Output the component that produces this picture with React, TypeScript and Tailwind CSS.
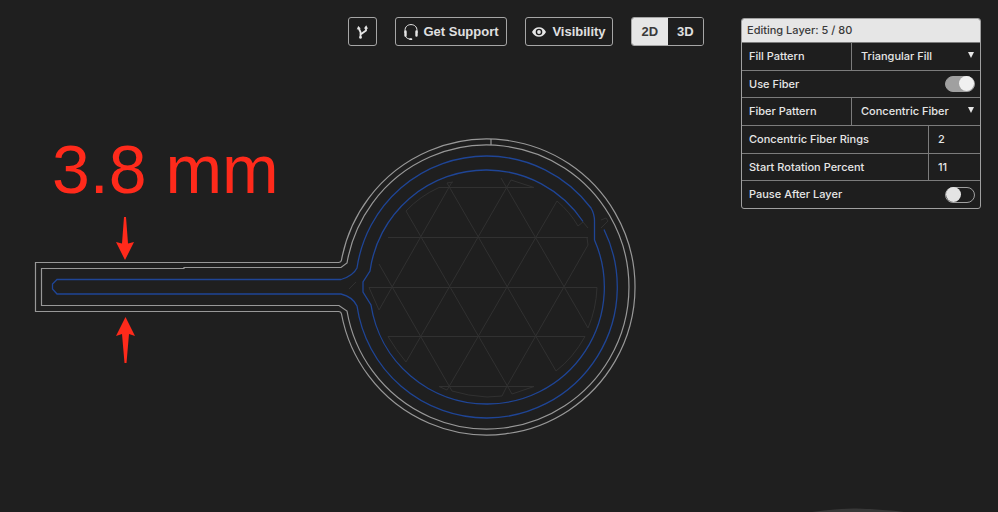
import React, { useState } from "react";

const toolbarText = "font-['Liberation_Sans',Arial,sans-serif] text-[13px] font-bold";
const toolbarButton = `${toolbarText} flex h-[29px] items-center justify-center rounded-[3px] border border-[#a6a6a6] bg-[#1e1e1e] text-[#e0e0e0]`;

function BranchIcon() {
  return (
    <svg viewBox="0 0 14 16" className="h-4 w-3.5" fill="none" stroke="#e6e6e6" aria-hidden="true">
      <path d="M4.5 13.5V10.5L10 6.5V3.5M4.5 10.5V8L2.8 4.5" strokeWidth="1.8" />
      <path d="M0.8 5.5L2.2 2L4.8 4.4ZM7.9 4.5L10.2 1.2L12 4.8Z" fill="#e6e6e6" stroke="none" />
      <circle cx="4.5" cy="13.4" r="1.3" fill="#e6e6e6" stroke="none" />
    </svg>
  );
}

function HeadsetIcon() {
  return (
    <svg viewBox="0 0 16 18" className="h-[18px] w-4 shrink-0" fill="none" stroke="#e6e6e6" aria-hidden="true">
      <path d="M2 10V7.5C2 3.8 4.5 1.6 8 1.6S14 3.8 14 7.5V10" strokeWidth="1" />
      <path d="M2.5 8.5V12.5M13.5 8.5V12.5" strokeWidth="2.4" strokeLinecap="round" />
      <path d="M2.5 13C3 15 5 16 8 16.3" strokeWidth="1" />
      <path d="M7.2 16.2H8.4" strokeWidth="1.8" strokeLinecap="round" />
    </svg>
  );
}

function EyeIcon() {
  return (
    <svg viewBox="0 0 14 10" className="h-2.5 w-3.5 shrink-0" aria-hidden="true">
      <path
        fill="#e6e6e6"
        fillRule="evenodd"
        d="M0 5C1.5 2 4 0.3 7 0.3S12.5 2 14 5C12.5 8 10 9.7 7 9.7S1.5 8 0 5ZM7 1.7A3.3 3.3 0 1 0 7 8.3A3.3 3.3 0 1 0 7 1.7Z"
      />
      <circle cx="7" cy="5" r="1.9" fill="#e6e6e6" />
    </svg>
  );
}

function LayerDrawing() {
  return (
    <svg
      viewBox="0 0 998 512"
      className="absolute inset-x-0 top-0 w-full"
      fill="none"
      role="img"
      aria-label="Layer toolpath"
    >
      {/* triangular infill */}
      <g stroke="#313131" strokeWidth="1">
        <path d="M439 187.5H534M388 237.5H588M369 287.5H597M388 336.5H585M439 386.5H534" />
        <path d="M452 182L379 310L369 287.5M511 180L406 362Q396 350 388 336.5M557 201L447 390L439 386.5M588 245L507 386L502 396L487 397Q468 396 452 391" />
        <path d="M379 264L452 391M406 211L512 394L534 386.5M447 183L556 371Q573 358 585 336.5M501 178L588 328Q596 310 597 287.5" />
        <path d="M406 211Q420 196 439 187.5M447 183L453 182M511 180L534 187.5M557 201Q570 212 578 226L583 222L588 228M588 245L587 237.5M601 220L606 218L608 221L601 228M349 289L356 282" />
      </g>
      {/* continuous fiber */}
      <path
        stroke="#1f4596"
        strokeWidth="1.3"
        d="M604 229.5A131 131 0 0 1 487 418A131 131 0 0 1 357 306Q353 297 341 294H57L52.5 289V284L57 279.5H341Q353 276 357 268A131 131 0 0 1 487 156A131 131 0 0 1 591 208Q594.5 214 594.5 221V240A117 117 0 0 1 487 404A117 117 0 0 1 371 305L363 292V282L370 271A117 117 0 0 1 487 170A117 117 0 0 1 583 221.5"
      />
      {/* walls */}
      <g stroke="#989898" strokeWidth="1.2">
        <path d="M35.5 262.5H338.5Q341 262.5 341.5 260A148 148 0 1 1 341.5 314Q341 311.5 338.5 311.5H35.5Z" />
        <path d="M41.5 268.5H184V267.5H341L347 263A142 142 0 1 1 347 311L339 305.5H41.5Z" />
        <path d="M491 139V145" />
      </g>
      {/* width annotation */}
      <g fill="#ff2a1b">
        <text x="52" y="193" fontSize="68" className="font-['Liberation_Sans',Arial,sans-serif]">
          3.8 mm
        </text>
        <path d="M124 217H126L128 243.5L134 242L125 260L116 242L122 243.5Z" />
        <path d="M125.5 317L135 336L129 334L126.5 363H124.5L122 334L116 336Z" />
      </g>
      <path d="M812 512Q840 508 857 508.5Q885 509.5 904 512Z" fill="#383838" />
    </svg>
  );
}

const rowStyle = "flex border-t border-[#7c7c7c]";
const labelStyle = "flex flex-1 items-center pl-[7px]";

function SelectRow({ id, label, options }: { id: string; label: string; options: string[] }) {
  return (
    <div className={rowStyle}>
      <label htmlFor={id} className={labelStyle}>
        {label}
      </label>
      <div className="relative flex w-[129px] border-l border-[#7c7c7c]">
        <select id={id} className="w-full appearance-none bg-transparent pl-[9px] outline-none">
          {options.map((option) => (
            <option key={option}>{option}</option>
          ))}
        </select>
        <svg viewBox="0 0 6 6" className="pointer-events-none absolute right-[6px] top-[9px] size-1.5" aria-hidden="true">
          <path d="M0 0H6L3 6Z" fill="#e6e6e6" />
        </svg>
      </div>
    </div>
  );
}

function NumberRow({ id, label, value }: { id: string; label: string; value: string }) {
  return (
    <div className={rowStyle}>
      <label htmlFor={id} className={labelStyle}>
        {label}
      </label>
      <input
        id={id}
        type="text"
        inputMode="numeric"
        defaultValue={value}
        className="w-[52px] border-l border-[#7c7c7c] bg-transparent pl-[9px] outline-none"
      />
    </div>
  );
}

function SwitchRow({ id, label, on }: { id: string; label: string; on?: boolean }) {
  return (
    <div className={`${rowStyle} pr-[5px]`}>
      <label htmlFor={id} className={labelStyle}>
        {label}
      </label>
      <input
        id={id}
        type="checkbox"
        defaultChecked={on}
        className="flex h-4 w-[30px] appearance-none items-center self-center rounded-full border border-[#a0a0a0] before:size-[15px] before:shrink-0 before:rounded-full before:bg-[#e4e4e4] checked:justify-end checked:bg-[#a0a0a0] checked:before:bg-[#f0f0f0]"
      />
    </div>
  );
}

export default function App() {
  const [view, setView] = useState("2D");
  return (
    <main className="relative min-h-screen w-full overflow-hidden bg-[#1f1f1f] font-[Inter,'Liberation_Sans',sans-serif]">
      <LayerDrawing />
      <div className="relative flex items-start justify-end gap-[37px] pr-[17px] pt-[17px]">
        <nav className="flex gap-[18px]">
          <button type="button" aria-label="Branch" className={`${toolbarButton} w-[29px]`}>
            <BranchIcon />
          </button>
          <button type="button" className={`${toolbarButton} w-28 gap-1`}>
            <HeadsetIcon />
            Get Support
          </button>
          <button type="button" className={`${toolbarButton} w-[88px] gap-1.5`}>
            <EyeIcon />
            Visibility
          </button>
          <div className={`${toolbarText} flex h-[29px] w-[73px] overflow-hidden rounded-[3px] border border-[#a6a6a6]`}>
            {["2D", "3D"].map((mode) => (
              <button
                key={mode}
                type="button"
                aria-pressed={view === mode}
                onClick={() => setView(mode)}
                className="flex-1 bg-[#1e1e1e] text-[#e0e0e0] aria-pressed:bg-[#e6e6e6] aria-pressed:text-[#3a3a3a]"
              >
                {mode}
              </button>
            ))}
          </div>
        </nav>
        <section className="mt-px w-60 overflow-hidden rounded-[3px] border border-[#a0a0a0] bg-[#1e1e1e] text-[11px] font-medium text-[#e6e6e6]">
          <h2 className="flex h-[23px] items-center bg-[#e6e6e6] pl-[5px] text-[#3a3a3a]">Editing Layer: 5 / 80</h2>
          <div className="grid h-[166px] grid-rows-6">
            <SelectRow id="fill" label="Fill Pattern" options={["Triangular Fill", "Solid Fill"]} />
            <SwitchRow id="fiber" label="Use Fiber" on />
            <SelectRow id="pattern" label="Fiber Pattern" options={["Concentric Fiber", "Isotropic Fiber"]} />
            <NumberRow id="rings" label="Concentric Fiber Rings" value="2" />
            <NumberRow id="rotation" label="Start Rotation Percent" value="11" />
            <SwitchRow id="pause" label="Pause After Layer" />
          </div>
        </section>
      </div>
    </main>
  );
}
